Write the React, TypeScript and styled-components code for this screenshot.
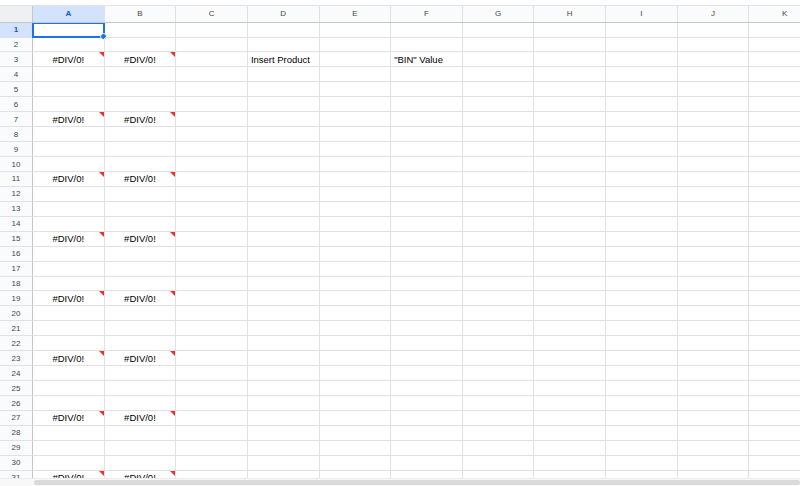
import React from 'react';
import styled, { createGlobalStyle } from 'styled-components';

const GlobalStyle = createGlobalStyle`
    html, body {
        margin: 0;
        padding: 0;
        background: #ffffff;
        overflow: hidden;
    }
`;

const COLS = ['A', 'B', 'C', 'D', 'E', 'F', 'G', 'H', 'I', 'J', 'K'];
const ROW_COUNT = 31;
const COL_W = 71.63;
const TEMPLATE = `33px repeat(${COLS.length}, ${COL_W}px)`;

const Host = styled.div`
    position: relative;
    width: 800px;
    height: 486px;
    display: flex;
    flex-direction: column;
    font-family: 'Liberation Sans', Arial, sans-serif;
    background: #ffffff;
    overflow: hidden;
`;

const TopStrip = styled.div`
    height: 5px;
    flex: none;
`;

const HeaderRow = styled.div`
    display: grid;
    grid-template-columns: ${TEMPLATE};
    height: 17.6px;
    flex: none;
    border-top: 1px solid #e3e3e3;
    border-bottom: 1px solid #c4c7c5;
    box-sizing: border-box;
`;

const Corner = styled.div`
    background: #eef0f1;
    border-right: 1px solid #c4c7c5;
`;

const ColHead = styled.div<{ $active?: boolean }>`
    display: flex;
    align-items: center;
    justify-content: center;
    font-size: 8px;
    font-weight: ${(p) => (p.$active ? 700 : 400)};
    color: ${(p) => (p.$active ? '#0b57d0' : '#444746')};
    background: ${(p) => (p.$active ? '#d3e3fd' : '#f9fbfd')};
    border-right: 1px solid #e1e1e1;
`;

const Body = styled.div`
    flex: 1;
    overflow: hidden;
`;

const Row = styled.div`
    display: grid;
    grid-template-columns: ${TEMPLATE};
    height: 14.95px;
`;

const RowHead = styled.div<{ $active?: boolean }>`
    display: flex;
    align-items: center;
    justify-content: center;
    font-size: 8px;
    font-weight: ${(p) => (p.$active ? 700 : 400)};
    color: ${(p) => (p.$active ? '#0b57d0' : '#444746')};
    background: ${(p) => (p.$active ? '#d3e3fd' : '#f9fbfd')};
    border-right: 1px solid #c4c7c5;
    border-bottom: 1px solid #e1e1e1;
    box-sizing: border-box;
`;

const Cell = styled.div<{ $align?: 'center' | 'left' }>`
    position: relative;
    display: flex;
    align-items: center;
    justify-content: ${(p) => (p.$align === 'left' ? 'flex-start' : 'center')};
    padding: 0 3px;
    font-size: 9.5px;
    color: #000000;
    white-space: nowrap;
    border-right: 1px solid #e1e1e1;
    border-bottom: 1px solid #e1e1e1;
    box-sizing: border-box;
`;

const ErrorMark = styled.span`
    position: absolute;
    top: 0;
    right: 0;
    width: 0;
    height: 0;
    border-top: 5px solid #e8322b;
    border-left: 5px solid transparent;
`;

const Selection = styled.span`
    position: absolute;
    left: -1px;
    top: -1px;
    right: -1px;
    bottom: -1px;
    border: 2px solid #1a73e8;
    pointer-events: none;
`;

const Handle = styled.span`
    position: absolute;
    right: -4px;
    bottom: -4px;
    width: 7px;
    height: 7px;
    border-radius: 50%;
    background: #1a73e8;
    border: 1px solid #ffffff;
    box-sizing: border-box;
`;

/* horizontal scrollbar floats over the last, half-visible row */
const ScrollTrack = styled.div`
    position: absolute;
    left: 0;
    right: 0;
    bottom: 0;
    height: 8px;
    display: grid;
    grid-template-columns: 33px 1fr;
    background: #f8f8f8;
    border-top: 1px solid #ececec;
    box-sizing: border-box;
`;

const ScrollThumb = styled.div`
    grid-column: 2;
    margin: 1px 0 1px 1px;
    border-radius: 4px;
    background: #dadada;
`;

const cellText = (row: number, col: number): string => {
    if (row % 4 === 3 && (col === 0 || col === 1)) return '#DIV/0!';
    if (row === 3 && col === 3) return 'Insert Product';
    if (row === 3 && col === 5) return '"BIN" Value';
    return '';
};

export default function App() {
    const rows = Array.from({ length: ROW_COUNT }, (_, i) => i + 1);
    return (
        <Host>
            <GlobalStyle />
            <TopStrip />
            <HeaderRow>
                <Corner />
                {COLS.map((c, i) => (
                    <ColHead key={c} $active={i === 0}>
                        {c}
                    </ColHead>
                ))}
            </HeaderRow>
            <Body>
                {rows.map((r) => (
                    <Row key={r}>
                        <RowHead $active={r === 1}>{r}</RowHead>
                        {COLS.map((c, ci) => {
                            const text = cellText(r, ci);
                            const isError = text === '#DIV/0!';
                            return (
                                <Cell key={c} $align={isError ? 'center' : 'left'}>
                                    {text}
                                    {isError && <ErrorMark />}
                                    {r === 1 && ci === 0 && (
                                        <Selection>
                                            <Handle />
                                        </Selection>
                                    )}
                                </Cell>
                            );
                        })}
                    </Row>
                ))}
            </Body>
            <ScrollTrack>
                <ScrollThumb />
            </ScrollTrack>
        </Host>
    );
}
